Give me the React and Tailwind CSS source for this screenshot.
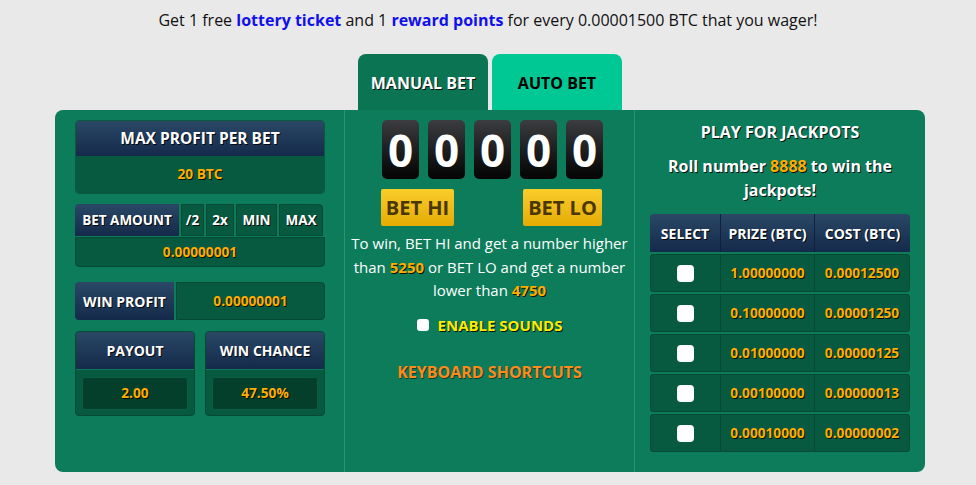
import React from "react";

const shadow = "[text-shadow:1px_1px_0_rgba(0,0,0,0.85)]";
const navy = "bg-linear-to-b from-[#2a4866] to-[#152a4a]";
const gold = "text-[#ffad00] " + shadow;

function Digit() {
  return (
    <div className="w-[37px] h-[59px] rounded-[5px] bg-linear-to-b from-[#3c3d40] to-[#050505] flex items-center justify-center text-white font-bold text-[44px] leading-none">
      0
    </div>
  );
}

function Box() {
  return <span className="inline-block w-[17px] h-[17px] rounded-[4px] bg-white" />;
}

function App() {
  const jackpots = [
    ["1.00000000", "0.00012500"],
    ["0.10000000", "0.00001250"],
    ["0.01000000", "0.00000125"],
    ["0.00100000", "0.00000013"],
    ["0.00010000", "0.00000002"],
  ];

  return (
    <div className="w-full h-[485px] bg-[#e9e9e9] font-['Open_Sans',sans-serif] overflow-hidden">
      <div className="h-[54px] pt-[9px] text-center text-[16px] leading-[22px] text-[#111]">
        Get 1 free <b className="text-[#1010ee]">lottery ticket</b> and 1{" "}
        <b className="text-[#1010ee]">reward points</b> for every 0.00001500 BTC that you wager!
      </div>

      {/* tabs */}
      <div className="flex gap-[4px] pl-[358px] h-[56px]">
        <div className={"w-[130px] rounded-t-[8px] bg-[#0b7553] flex items-center justify-center text-white font-bold text-[16px] pt-[2px] " + shadow}>
          MANUAL BET
        </div>
        <div className="w-[130px] rounded-t-[8px] bg-[#00c895] flex items-center justify-center text-black font-bold text-[16px] pt-[2px]">
          AUTO BET
        </div>
      </div>

      <div className="mx-[55px] w-[870px] h-[362px] rounded-[8px] bg-[#0d7c5a] grid grid-cols-[289px_291px_290px]">
        {/* left */}
        <div className="pl-[20px] pt-[10px] flex flex-col">
          <div className="w-[250px] rounded-[4px] overflow-hidden border border-[#0a5a40]">
            <div className={"h-[35px] flex items-center justify-center text-white font-bold text-[15.5px] " + navy + " " + shadow}>
              MAX PROFIT PER BET
            </div>
            <div className={"h-[37px] bg-[#07593f] flex items-center justify-center font-bold text-[13.7px] " + gold}>
              20 BTC
            </div>
          </div>

          <div className="mt-[10px] w-[250px] flex gap-[2px] h-[32px] text-white font-bold text-[13.5px]">
            <div className={"w-[104px] rounded-tl-[4px] flex items-center justify-center " + navy + " " + shadow}>BET AMOUNT</div>
            <div className={"w-[23px] bg-[#07593f] border border-[#064a34] flex items-center justify-center " + shadow}>/2</div>
            <div className={"w-[28px] bg-[#07593f] border border-[#064a34] flex items-center justify-center " + shadow}>2x</div>
            <div className={"w-[41px] bg-[#07593f] border border-[#064a34] flex items-center justify-center " + shadow}>MIN</div>
            <div className={"w-[44px] rounded-tr-[4px] bg-[#07593f] border border-[#064a34] flex items-center justify-center " + shadow}>MAX</div>
          </div>
          <div className={"mt-[1px] w-[250px] h-[30px] rounded-b-[4px] bg-[#07593f] border border-[#064a34] flex items-center justify-center font-bold text-[13.7px] " + gold}>
            0.00000001
          </div>

          <div className="mt-[15px] w-[250px] h-[38px] flex gap-[2px]">
            <div className={"w-[99px] rounded-l-[4px] flex items-center justify-center text-white font-bold text-[14px] " + navy + " " + shadow}>
              WIN PROFIT
            </div>
            <div className={"flex-1 bg-[#07593f] border border-[#064a34] rounded-r-[4px] flex items-center justify-center font-bold text-[13.7px] " + gold}>
              0.00000001
            </div>
          </div>

          <div className="mt-[11px] w-[250px] flex gap-[10px]">
            {[["PAYOUT", "2.00"], ["WIN CHANCE", "47.50%"]].map(([label, val]) => (
              <div key={label} className="w-[120px] h-[85px] rounded-[4px] overflow-hidden border border-[#064a34] bg-[#07593f]">
                <div className={"h-[38px] flex items-center justify-center text-white font-bold text-[14px] border-b border-[#0b7a58] " + navy + " " + shadow}>
                  {label}
                </div>
                <div className="px-[6px] pt-[7px]">
                  <div className={"h-[33px] rounded-[3px] bg-[#033f2b] border border-[#0a5e44] flex items-center justify-center font-bold text-[13.7px] " + gold}>
                    {val}
                  </div>
                </div>
              </div>
            ))}
          </div>
        </div>

        {/* middle */}
        <div className="border-l border-r border-[#1e9a73] pt-[10px] flex flex-col items-center">
          <div className="w-[221px] ml-[6px] flex justify-between">
            <Digit />
            <Digit />
            <Digit />
            <Digit />
            <Digit />
          </div>
          <div className="w-[221px] ml-[4px] mt-[10px] flex justify-between">
            <button className="w-[73px] h-[37px] bg-linear-to-b from-[#f9cd2a] to-[#e5ab00] text-[#4a3600] font-bold text-[20px] rounded-[2px]">
              BET HI
            </button>
            <button className="w-[79px] h-[37px] bg-linear-to-b from-[#f9cd2a] to-[#e5ab00] text-[#4a3600] font-bold text-[20px] rounded-[2px]">
              BET LO
            </button>
          </div>
          <p className="mt-[6px] px-[4px] text-center text-white text-[15px] leading-[23.5px]">
            To win, BET HI and get a number higher than{" "}
            <b className={gold}>5250</b> or BET LO and get a number lower than{" "}
            <b className={gold}>4750</b>
          </p>
          <div className="mt-[11px] flex items-center gap-[9px]">
            <span className="inline-block w-[12px] h-[12px] rounded-[3px] bg-white" />
            <span className={"text-[#ffeb00] font-bold text-[15px] " + shadow}>ENABLE SOUNDS</span>
          </div>
          <div className="mt-[24px] text-[#ff8a1c] font-bold text-[16px] [text-shadow:1px_1px_0_rgba(0,0,0,0.5)]">
            KEYBOARD SHORTCUTS
          </div>
        </div>

        {/* right */}
        <div className="pt-[12px] flex flex-col items-center">
          <div className={"text-white font-bold text-[16px] leading-[20px] " + shadow}>PLAY FOR JACKPOTS</div>
          <div className={"mt-[12px] w-[250px] text-center text-white font-bold text-[16px] leading-[24px] " + shadow}>
            Roll number <span className="text-[#ffad00]">8888</span> to win the jackpots!
          </div>
          <div className="mt-[12px] w-[260px] flex flex-col gap-[2px]">
            <div className={"h-[38px] rounded-t-[4px] flex text-white font-bold text-[14px] " + navy + " " + shadow}>
              <div className="w-[71px] flex items-center justify-center border-r border-[#0e223d]">SELECT</div>
              <div className="w-[94px] flex items-center justify-center border-r border-[#0e223d]">PRIZE (BTC)</div>
              <div className="flex-1 flex items-center justify-center">COST (BTC)</div>
            </div>
            {jackpots.map(([prize, cost]) => (
              <div key={prize} className="h-[38px] rounded-[3px] bg-[#07593f] border border-[#064a34] flex font-bold text-[13.7px]">
                <div className="w-[70px] flex items-center justify-center border-r border-[#064a34]">
                  <Box />
                </div>
                <div className={"w-[94px] flex items-center justify-center border-r border-[#064a34] " + gold}>{prize}</div>
                <div className={"flex-1 flex items-center justify-center " + gold}>{cost}</div>
              </div>
            ))}
          </div>
        </div>
      </div>
    </div>
  );
}

export default App;
